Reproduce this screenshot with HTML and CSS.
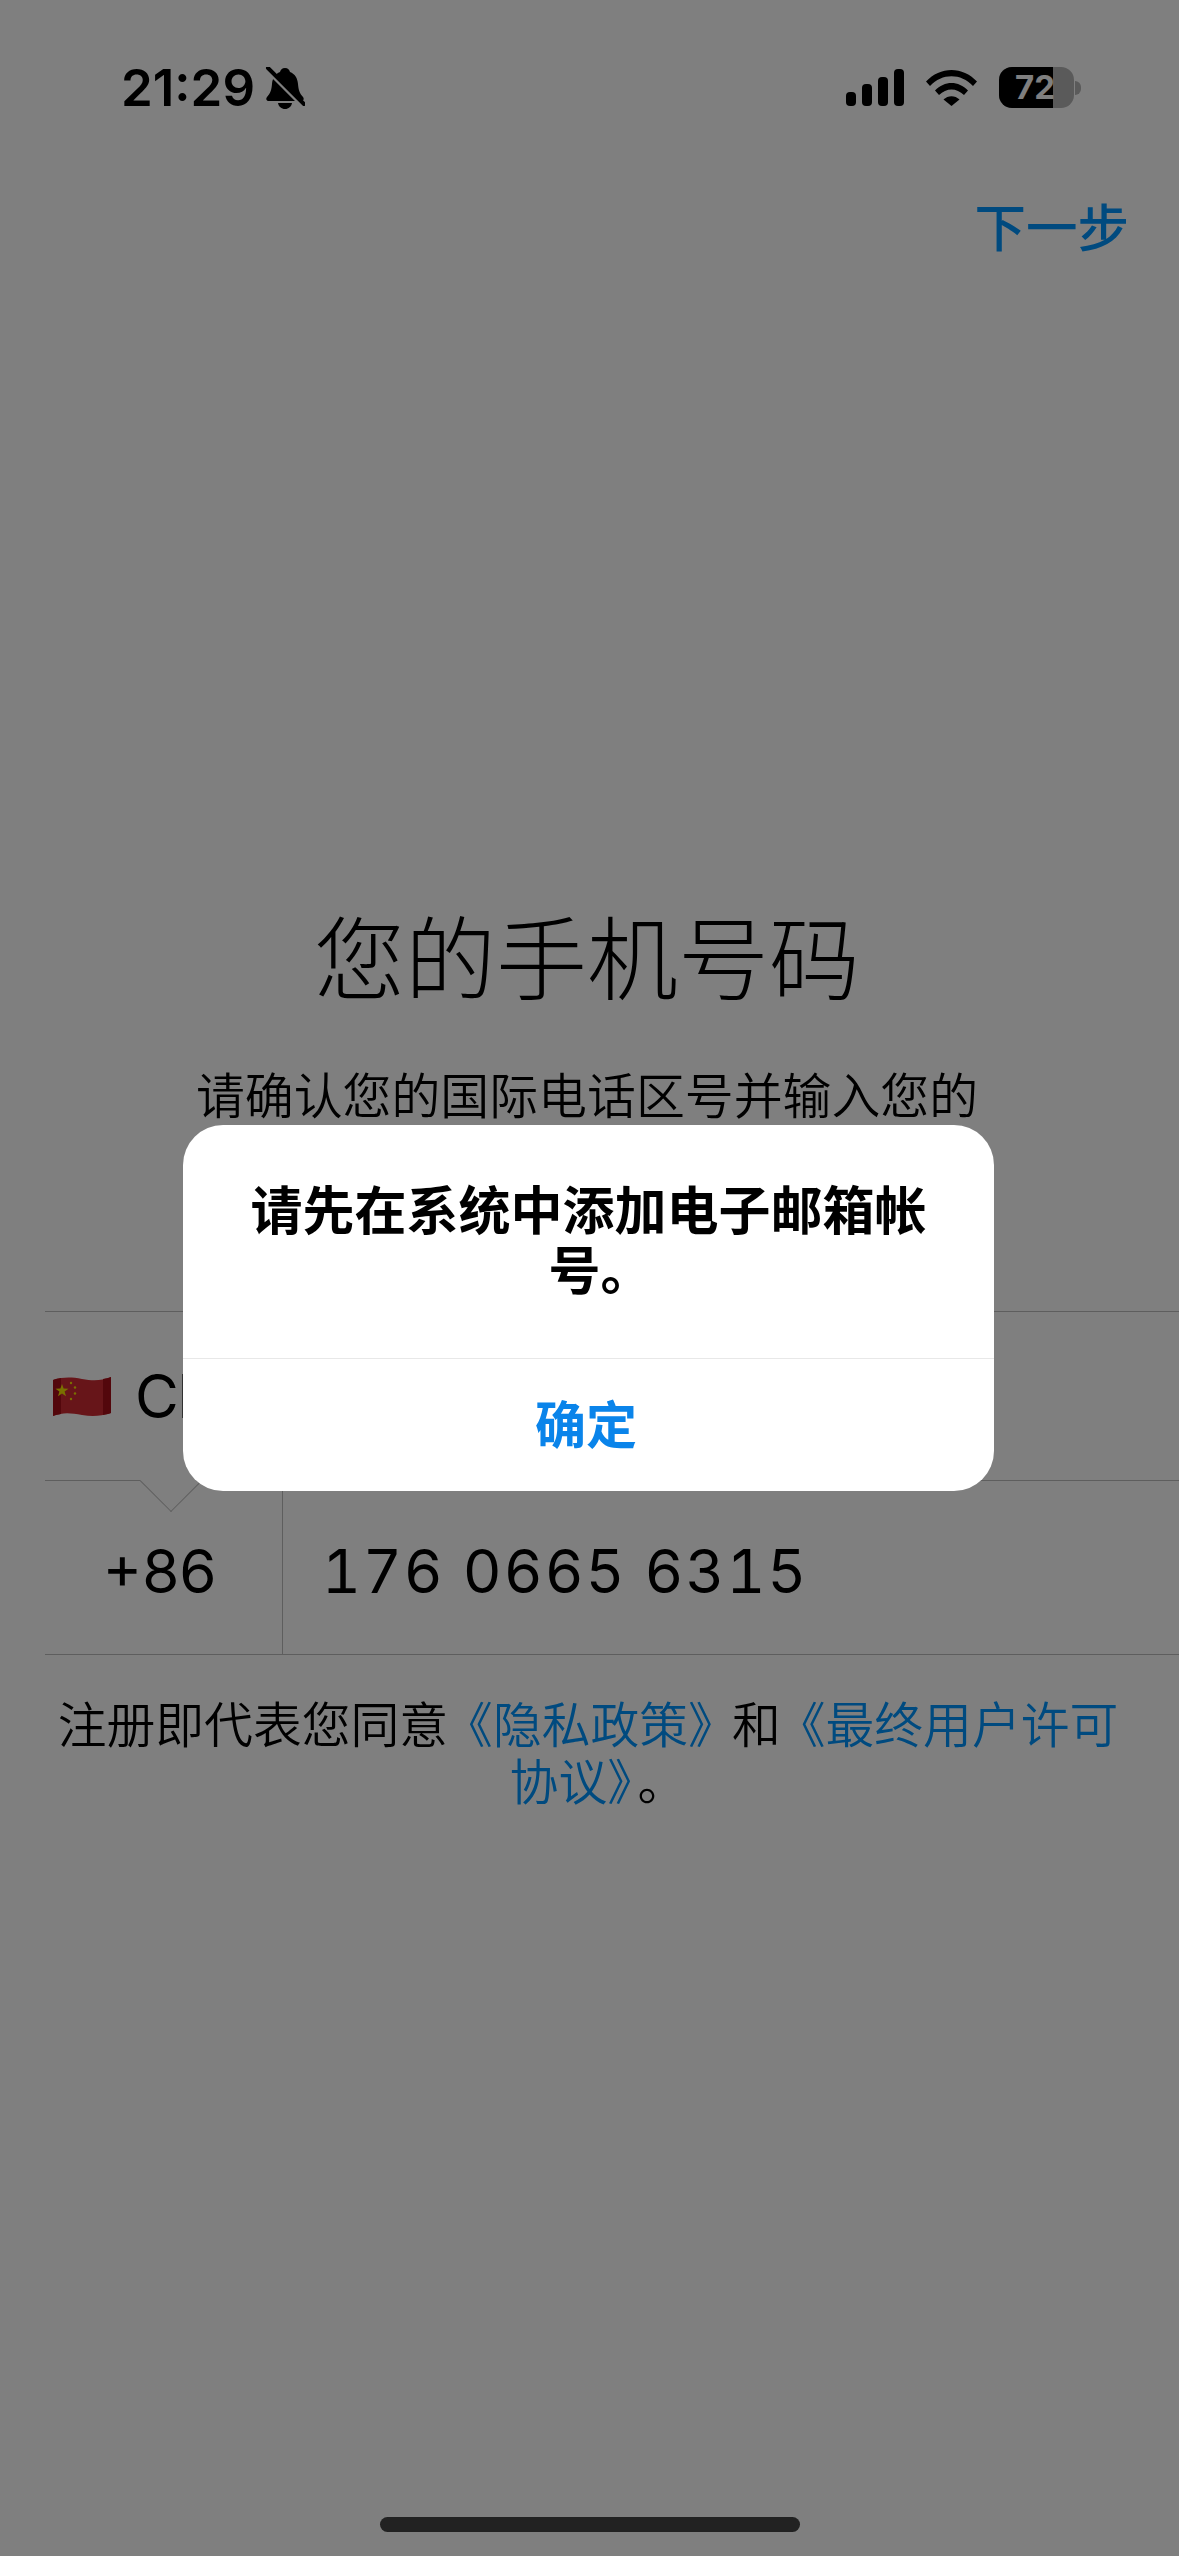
FILE: index.html
```html
<!DOCTYPE html>
<html lang="zh-CN">
<head>
    <meta charset="utf-8">
    <title>您的手机号码</title>
    <link rel="stylesheet" href="styles.css">
</head>
<body>
    <div class="page">
        <!-- Barra de status -->
        <div class="status-bar">
            <div class="status-left">
                <span class="clock">21:29</span>
                <svg class="bell" viewBox="0 0 40 42">
                    <path d="M20 1c3 0 4.500 2 5 4 5 2 7.500 6 8 12 .5 6 1.500 9 5 13 1.500 2 .5 4-2 4H4c-2.500 0-3.500-2-2-4 3.500-4 4.500-7 5-13 .5-6 3-10 8-12 .5-2 2-4 5-4z"/>
                    <path d="M13 36h14c-.5 3.500-3.500 6-7 6s-6.500-2.500-7-6z"/>
                    <line class="bell-gap" x1="1" y1="3" x2="38" y2="40"/>
                    <line class="bell-slash" x1="3" y1="1" x2="39" y2="37"/>
                </svg>
            </div>
            <div class="status-right">
                <svg class="signal" viewBox="0 0 58 37">
                    <rect x="0" y="23" width="10" height="14" rx="4"/>
                    <rect x="16" y="15" width="10" height="22" rx="4"/>
                    <rect x="32" y="8" width="10" height="29" rx="4"/>
                    <rect x="48" y="0" width="10" height="37" rx="4"/>
                </svg>
                <svg class="wifi" viewBox="0 0 51 37">
                    <path d="M0 12.500C14-3 37-3 51 12.500l-4 4.500C35 4 16 4 4 17z"/>
                    <path d="M9 21.500c9.500-10 23.500-10 33 0l-4 4.500c-7.500-7.500-17.500-7.500-25 0z"/>
                    <path d="M17.500 30.500c4.500-4.500 11.500-4.500 16 0L25.500 37z"/>
                </svg>
                <div class="battery">
                    <div class="battery-body">
                        <div class="battery-level"></div>
                        <span class="battery-text">72</span>
                    </div>
                    <div class="battery-cap"></div>
                </div>
            </div>
        </div>

        <div class="nav">
            <span class="link next">下一步</span>
        </div>

        <h1 class="title">您的手机号码</h1>
        <p class="subtitle">请确认您的国际电话区号并输入您的<br>手机号码。</p>

        <div class="form">
            <div class="country-row">
                <svg class="flag" viewBox="0 0 58 42">
                    <path fill="#cf2a33" d="M0 5c10-3 18-3 29-1s19 2 29-2v36c-10 3-18 4-29 2S10 37 0 41z"/>
                    <path fill="#a60f18" d="M50 4c3-.5 5-1 8-2v36c-3 1-5 1.500-8 2z"/>
                    <path fill="#a60f18" d="M0 5c3-1 5-1.500 8-2v36c-3 .5-5 1-8 2z"/>
                    <polygon fill="#f5e000" points="9,9 10.600,13.600 15.500,13.700 11.600,16.600 13,21.300 9,18.500 5,21.300 6.400,16.600 2.500,13.700 7.400,13.600"/>
                    <circle fill="#f5e000" cx="18" cy="8" r="1.200"/>
                    <circle fill="#f5e000" cx="22" cy="12.500" r="1.200"/>
                    <circle fill="#f5e000" cx="22" cy="18.500" r="1.200"/>
                    <circle fill="#f5e000" cx="18" cy="24" r="1.200"/>
                </svg>
                <span class="country-name">China</span>
            </div>
            <div class="phone-row">
                <div class="phone-code">+86</div>
                <div class="phone-number">176 0665 6315</div>
            </div>
        </div>

        <p class="terms">注册即代表您同意<span class="link terms-policy">《隐私政策》</span>和<span class="link terms-eula">《最终用户许可</span><br><span class="link terms-tail">协议》</span>。</p>

        <div class="home-bar"></div>

        <!-- Escurece a tela atrás do alerta -->
        <div class="overlay"></div>

        <div class="alert">
            <div class="alert-message">请先在系统中添加电子邮箱帐<span class="alert-tail">号。</span></div>
            <div class="alert-button">确定</div>
        </div>
    </div>
</body>
</html>
```

FILE: styles.css
```css
/* Reset */
html, body, h1, p {
    margin: 0;
    padding: 0;
}

body {
    background-color: #fff;
    font-family: "Noto Sans CJK SC", sans-serif;
    color: #000;
}

.page {
    position: relative;
    width: 1179px;
    height: 2556px;
    overflow: hidden;
    display: flex;
    flex-direction: column;
}

/* Barra de status */
.status-bar {
    height: 108px;
    padding: 66px 98px 0 121px;
    box-sizing: border-box;
    display: flex;
    justify-content: space-between;
    align-items: flex-start;
}

.status-left {
    display: flex;
    align-items: flex-start;
    gap: 10px;
}

.clock {
    font-family: Inter, sans-serif;
    font-size: 51px;
    font-weight: 600;
    line-height: 43px;
}

.bell {
    width: 40px;
    height: 42px;
    margin-top: 1px;
}

.bell-gap {
    stroke: #fff;
    stroke-width: 3;
}

.bell-slash {
    stroke: #000;
    stroke-width: 4;
    stroke-linecap: round;
}

.status-right {
    display: flex;
    align-items: flex-start;
    padding-top: 3px;
}

.signal {
    width: 58px;
    height: 37px;
    margin-right: 22px;
}

.wifi {
    width: 51px;
    height: 37px;
    margin-right: 22px;
}

.battery {
    display: flex;
    align-items: center;
    margin-top: -2px;
}

.battery-body {
    position: relative;
    width: 75px;
    height: 41px;
    border-radius: 13px;
    background-color: #b4b4b4;
    overflow: hidden;
}

.battery-level {
    width: 54px;
    height: 41px;
    background-color: #000;
}

.battery-text {
    position: absolute;
    left: 16px;
    top: 0;
    font-family: Inter, sans-serif;
    font-size: 33px;
    font-weight: 700;
    line-height: 41px;
    color: #fff;
}

.battery-cap {
    width: 6px;
    height: 14px;
    margin-left: 1px;
    border-radius: 0 7px 7px 0;
    background-color: #b4b4b4;
}

/* Cabeçalho */
.nav {
    height: 70px;
    margin-top: 81px;
    padding-right: 50px;
    display: flex;
    justify-content: flex-end;
    align-items: center;
}

.link {
    color: #0095ff;
}

.next {
    font-size: 51.500px;
    font-weight: 500;
}

.title {
    margin-top: 644px;
    padding-right: 5px;
    font-size: 91px;
    font-weight: 300;
    line-height: 100px;
    text-align: center;
}

.subtitle {
    margin-top: 60px;
    padding-right: 5px;
    font-size: 48.900px;
    font-weight: 350;
    line-height: 60px;
    text-align: center;
}

/* Formulário */
.form {
    margin-top: 128px;
    margin-left: 45px;
}

.country-row {
    height: 170px;
    box-sizing: border-box;
    border-top: 1px solid #bdbdbd;
    border-bottom: 1px solid #bdbdbd;
    padding-left: 8px;
    display: flex;
    align-items: center;
    position: relative;
}

/* Seta que liga o país ao código */
.country-row::after {
    content: "";
    position: absolute;
    left: 104px;
    bottom: -23px;
    width: 44px;
    height: 44px;
    box-sizing: border-box;
    background-color: #fff;
    border-right: 1px solid #bdbdbd;
    border-bottom: 1px solid #bdbdbd;
    transform: rotate(45deg);
}

.flag {
    width: 58px;
    height: 42px;
}

.country-name {
    margin-left: 24px;
    font-family: Inter, sans-serif;
    font-size: 60px;
    letter-spacing: -1px;
}

.phone-row {
    height: 174px;
    box-sizing: border-box;
    border-bottom: 1px solid #bdbdbd;
    display: flex;
    font-family: Inter, sans-serif;
    font-size: 60px;
}

.phone-code {
    width: 238px;
    box-sizing: border-box;
    border-right: 1px solid #bdbdbd;
    padding: 6px 8px 0 0;
    display: flex;
    justify-content: center;
    align-items: center;
}

.phone-number {
    padding: 6px 0 0 39px;
    font-variant-numeric: tabular-nums;
    letter-spacing: 2px;
    display: flex;
    align-items: center;
}

.terms {
    margin-top: 38px;
    padding: 0 48px 0 45px;
    font-size: 48.800px;
    font-weight: 350;
    line-height: 57px;
    text-align: center;
}

.terms-policy {
    margin: 0 -5px 0 -4px;
}

.terms-eula {
    margin-left: -4px;
}

.terms-tail {
    margin: 0 6px 0 20px;
}

.home-bar {
    position: absolute;
    left: 380px;
    bottom: 24px;
    width: 420px;
    height: 15px;
    border-radius: 8px;
    background-color: #222;
    z-index: 3;
}

.overlay {
    position: absolute;
    inset: 0;
    background-color: rgba(0, 0, 0, 0.5);
    z-index: 1;
}

/* Alerta */
.alert {
    position: absolute;
    left: 183px;
    top: 1125px;
    width: 811px;
    height: 366px;
    border-radius: 40px;
    background-color: #fff;
    z-index: 2;
    display: flex;
    flex-direction: column;
}

.alert-message {
    height: 234px;
    box-sizing: border-box;
    padding: 53px 60px 0;
    font-size: 52px;
    font-weight: 700;
    line-height: 60px;
    text-align: center;
    border-bottom: 1px solid #e8e8e8;
}

.alert-tail {
    display: inline-block;
    padding-left: 24px;
}

.alert-button {
    flex: 1;
    padding: 0 5px 6px 0;
    display: flex;
    justify-content: center;
    align-items: center;
    font-size: 51px;
    font-weight: 700;
    color: #0a84ea;
}
```
